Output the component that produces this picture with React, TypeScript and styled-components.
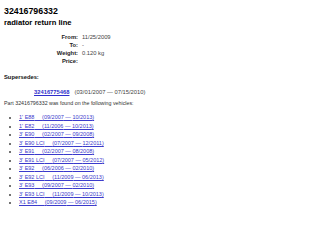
import styled, { createGlobalStyle } from 'styled-components';

const GlobalStyle = createGlobalStyle`
    html, body {
        margin: 0;
        padding: 0;
        background: #ffffff;
    }
    body {
        font-family: 'Liberation Sans', Arial, sans-serif;
        color: #222222;
    }
`;

interface Vehicle {
    model: string;
    from: string;
    to: string;
}

const vehicles: Vehicle[] = [
    { model: "1' E88", from: '09/2007', to: '10/2013' },
    { model: "1' E82", from: '11/2006', to: '10/2013' },
    { model: "3' E90", from: '02/2007', to: '09/2008' },
    { model: "3' E90 LCI", from: '07/2007', to: '12/2011' },
    { model: "3' E91", from: '02/2007', to: '08/2008' },
    { model: "3' E91 LCI", from: '07/2007', to: '05/2012' },
    { model: "3' E92", from: '06/2006', to: '02/2010' },
    { model: "3' E92 LCI", from: '11/2009', to: '06/2013' },
    { model: "3' E93", from: '09/2007', to: '02/2010' },
    { model: "3' E93 LCI", from: '11/2009', to: '10/2013' },
    { model: 'X1 E84', from: '09/2009', to: '06/2015' },
];

const details: [string, string][] = [
    ['From:', '11/25/2009'],
    ['To:', '-'],
    ['Weight:', '0.120 kg'],
    ['Price:', ''],
];

export default function App(): JSX.Element {
    return (
        <>
            <GlobalStyle />
            <Page>
                <PartNumber>32416796332</PartNumber>
                <PartName>radiator return line</PartName>
                <DetailsGrid>
                    {details.map(([label, value]) => (
                        <DetailRow key={label}>
                            <DetailLabel>{label}</DetailLabel>
                            <DetailValue>{value}</DetailValue>
                        </DetailRow>
                    ))}
                </DetailsGrid>
                <SectionTitle>Supersedes:</SectionTitle>
                <SupersedesRow>
                    <PartLink href="#">32416775468</PartLink>
                    <span>(03/01/2007 — 07/15/2010)</span>
                </SupersedesRow>
                <FoundText>Part 32416796332 was found on the following vehicles:</FoundText>
                <VehicleList>
                    {vehicles.map((v) => (
                        <VehicleItem key={v.model}>
                            <VehicleLink href="#">
                                {v.model}
                                {'\u00a0\u00a0\u00a0\u00a0\u00a0'}({v.from} — {v.to})
                            </VehicleLink>
                        </VehicleItem>
                    ))}
                </VehicleList>
            </Page>
        </>
    );
}

const Page = styled.div`
    padding: 4px 4px;
    font-size: 5.5px;
    line-height: 1.5;
`;

const PartNumber = styled.h1`
    margin: 1px 0 0;
    font-size: 8.8px;
    font-weight: bold;
    line-height: 12px;
    color: #000000;
`;

const PartName = styled.h2`
    margin: 0;
    font-size: 7.6px;
    font-weight: bold;
    line-height: 12px;
    color: #000000;
`;

const DetailsGrid = styled.div`
    display: grid;
    grid-template-columns: 74px auto;
    row-gap: 2px;
    margin-top: 5px;
    font-size: 5.8px;
`;

const DetailRow = styled.div`
    display: contents;
`;

const DetailLabel = styled.div`
    text-align: right;
    font-weight: bold;
    color: #222222;
    line-height: 6px;
`;

const DetailValue = styled.div`
    padding-left: 4px;
    color: #444444;
    line-height: 6px;
`;

const SectionTitle = styled.div`
    margin-top: 9px;
    font-weight: bold;
    font-size: 5.8px;
    color: #111111;
`;

const SupersedesRow = styled.div`
    display: flex;
    gap: 5px;
    margin-top: 6px;
    padding-left: 30px;
    font-size: 5.8px;
    color: #444444;
`;

const PartLink = styled.a`
    font-weight: bold;
    color: #2e2ecc;
`;

const FoundText = styled.div`
    margin-top: 4px;
    font-size: 5.3px;
    color: #333333;
`;

const VehicleList = styled.ul`
    margin: 5px 0 0;
    padding-left: 15px;
    list-style: disc;
`;

const VehicleItem = styled.li`
    line-height: 8.5px;
    color: #444444;
`;

const VehicleLink = styled.a`
    color: #3a3acc;
`;
